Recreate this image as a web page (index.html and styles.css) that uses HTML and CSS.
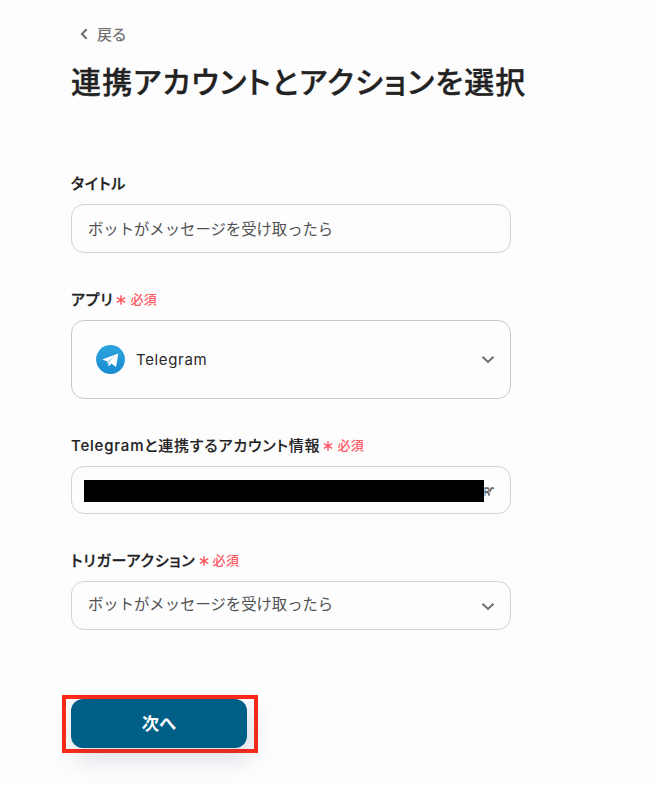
FILE: index.html
```
<!DOCTYPE html>
<html lang="ja">
<head>
<meta charset="utf-8">
<title>連携アカウントとアクションを選択</title>
<link rel="stylesheet" href="styles.css">
</head>
<body>
<main class="page">
  <a class="back"><svg class="back-icon" viewBox="0 0 8 12"><path d="M6.7 1.2 1.9 6l4.8 4.8"/></svg><span>戻る</span></a>
  <h1 class="title">連携アカウントとアクションを選択</h1>
  <form class="form">
    <div class="field">
      <div class="label"><span class="label-strong">タイトル</span></div>
      <div class="control"><span class="value">ボットがメッセージを受け取ったら</span></div>
    </div>
    <div class="field">
      <div class="label"><span class="label-strong">アプリ</span><span class="required"><svg class="star" viewBox="0 0 10 10"><path d="M5 .2v9.6M.8 2.6l8.4 4.8M9.2 2.6.8 7.4"/></svg>必須</span></div>
      <div class="control control-app">
        <svg class="app-icon" viewBox="0 0 30 30"><defs><linearGradient id="sky" x1="0" y1="0" x2="0" y2="1"><stop offset="0" stop-color="#2da5df"/><stop offset="1" stop-color="#198bd2"/></linearGradient></defs><circle cx="14.5" cy="14.5" r="14.4" fill="url(#sky)"/><path d="M6.2 14.6 22.3 8.5 20 22l-4.5-3.6-2.6 2.8-1.9-5z" fill="#fff"/><path d="m11 16.2 8.1-5.3-5.7 6.4-.5 3.9z" fill="#b8d9ec"/></svg>
        <span class="app-name">Telegram</span>
        <svg class="chevron" viewBox="0 0 14 9"><path d="m1.5 1.7 5.5 5.2 5.5-5.2"/></svg>
      </div>
    </div>
    <div class="field">
      <div class="label"><span>Telegramと連携するアカウント情報</span><span class="required"><svg class="star" viewBox="0 0 10 10"><path d="M5 .2v9.6M.8 2.6l8.4 4.8M9.2 2.6.8 7.4"/></svg>必須</span></div>
      <div class="control control-account"><span class="mask"></span><svg class="overlap" viewBox="0 0 10 10"><path d="M0 1.2h3.5L5 3.5 3.2 5 5 8.5M0 5h3M9.5 1.2H7L5 5" stroke="#666a70" stroke-width="1.8"/><path d="M.5 1v8" stroke="#4389bd"/><path d="M4.5 2v3" stroke="#e0a477"/></svg></div>
    </div>
    <div class="field">
      <div class="label"><span class="label-strong">トリガーアクション</span><span class="required"><svg class="star" viewBox="0 0 10 10"><path d="M5 .2v9.6M.8 2.6l8.4 4.8M9.2 2.6.8 7.4"/></svg>必須</span></div>
      <div class="control control-trigger"><span class="value">ボットがメッセージを受け取ったら</span><svg class="chevron" viewBox="0 0 14 9"><path d="m1.5 1.7 5.5 5.2 5.5-5.2"/></svg></div>
    </div>
    <div class="highlight"><button class="next" type="button">次へ</button></div>
  </form>
</main>
</body>
</html>
```

FILE: styles.css
```
* { box-sizing: border-box; }
body {
  margin: 0;
  background: #fdfdfe;
  color: #222;
  font-family: Inter, "Noto Sans CJK JP", sans-serif;
  font-feature-settings: "palt";
}
svg { fill: none; flex: none; }
.page { width: 657px; height: 786px; padding: 24px 0 0 71px; overflow: hidden; }
.back { display: flex; align-items: center; height: 20px; padding-left: 9px; gap: 9px; color: #737373; font-size: 15px; font-weight: 500; }
.back span { padding-bottom: 2px; letter-spacing: .5px; }
.back-icon { width: 8px; height: 12px; stroke: #6d6d6d; stroke-width: 2; }
.title { margin: 14px 0 0; height: 48px; line-height: 48px; font-size: 30px; font-weight: 500; letter-spacing: 1.18px; white-space: nowrap; -webkit-text-stroke: .35px #222; }
.form { width: 440px; padding-top: 66px; }
.field { margin-bottom: 35px; }
.label { display: flex; align-items: center; height: 20px; margin-bottom: 12px; font-size: 15px; font-weight: 500; letter-spacing: .8px; white-space: nowrap; -webkit-text-stroke: .12px #222; }
.label-strong { -webkit-text-stroke: .3px #222; }
.required { display: flex; align-items: center; margin-left: 3px; color: #ff5964; font-size: 13px; font-weight: 500; letter-spacing: .4px; -webkit-text-stroke: 0; }
.star { width: 10px; height: 10px; margin: 4px 4px 0 0; stroke: #ff5964; stroke-width: 1.5; }
.control { display: flex; align-items: center; height: 49px; padding: 0 15px 0 16px; border: 1px solid #d0d2dd; border-radius: 13px; }
.value { padding-bottom: 2px; color: #525252; font-size: 15.35px; white-space: nowrap; font-feature-settings: normal; }
.control-app { height: 79px; padding-left: 24px; border-color: #c9c9cb; }
.app-icon { width: 30px; height: 30px; margin-right: 10px; }
.app-name { font-size: 15px; letter-spacing: .65px; color: #282828; }
.chevron { width: 14px; height: 9px; margin-left: auto; stroke: #707070; stroke-width: 2.1; }
.control-account { height: 48px; padding-left: 12px; }
.mask { width: 400px; height: 22px; margin-top: 1px; background: #000; }
.overlap { width: 11px; height: 10px; margin-top: 4px; }
.control-trigger .value { padding-bottom: 5px; }
.control-trigger .chevron { margin-top: 2px; }
.highlight { width: 196px; height: 58px; margin: 65px 0 0 -9px; padding: 0 5px; border: 4px solid #fc2b18; }
.next { display: block; width: 176px; height: 49px; padding: 0; border: 0; border-radius: 12px; background: #005f87; color: #fff; font: 700 17.3px/49px Inter, "Noto Sans CJK JP", sans-serif; box-shadow: 4px 10px 24px rgba(60, 50, 90, .18); }
```
